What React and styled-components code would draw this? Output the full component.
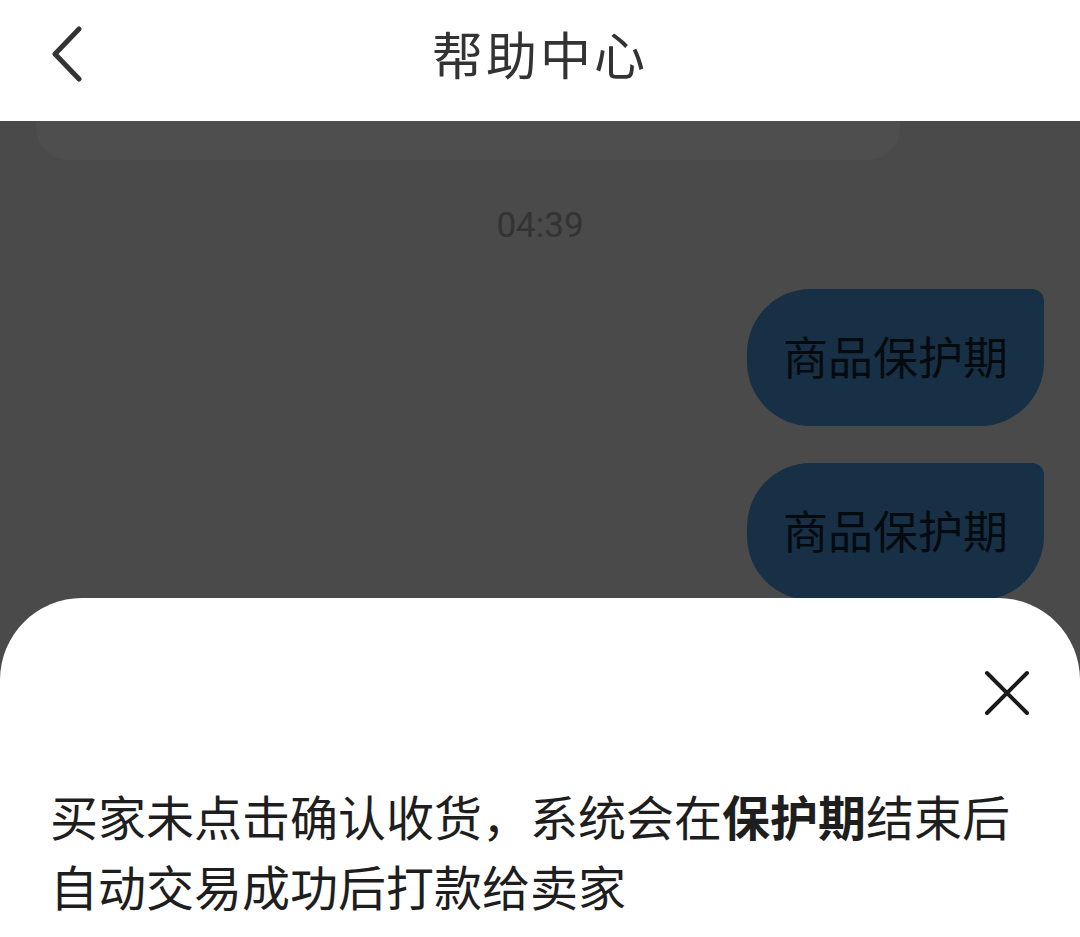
import React from 'react';
import styled, { createGlobalStyle } from 'styled-components';

const GlobalStyle = createGlobalStyle`
  html, body {
    margin: 0;
    padding: 0;
    background: #4a4a4a;
  }
  body {
    font-family: 'Noto Sans CJK SC', 'Noto Sans', sans-serif;
  }
`;

const messages = ['商品保护期', '商品保护期'];

const App = () => {
  return (
    <>
      <GlobalStyle />
      <Page>
        <Header>
          <BackButton aria-label="返回">
            <svg width="34" height="56" viewBox="0 0 34 56" fill="none">
              <path d="M29 3 L5 28 L29 53" stroke="#333" strokeWidth="5" strokeLinecap="round" strokeLinejoin="round" />
            </svg>
          </BackButton>
          <Title>帮助中心</Title>
        </Header>
        <Chat>
          <PrevCard />
          <Time>04:39</Time>
          <Messages>
            {messages.map((m, i) => (
              <Row key={i}>
                <Bubble>{m}</Bubble>
              </Row>
            ))}
          </Messages>
        </Chat>
        <Sheet>
          <SheetTop>
            <CloseButton aria-label="关闭">
              <svg width="46" height="46" viewBox="0 0 46 46" fill="none">
                <path d="M3 3 L43 43 M43 3 L3 43" stroke="#1a1a1a" strokeWidth="4" strokeLinecap="round" />
              </svg>
            </CloseButton>
          </SheetTop>
          <Answer>
            <Line>买家未点击确认收货，系统会在<b>保护期</b>结束后</Line>
            <Line>自动交易成功后打款给卖家</Line>
          </Answer>
        </Sheet>
      </Page>
    </>
  );
};

const Page = styled.div`
  position: relative;
  width: 1080px;
  height: 937px;
  overflow: hidden;
  display: flex;
  flex-direction: column;
  background: #4a4a4a;
`;

const Header = styled.div`
  position: relative;
  height: 121px;
  flex-shrink: 0;
  background: #ffffff;
  display: flex;
  align-items: center;
  justify-content: center;
`;

const BackButton = styled.div`
  position: absolute;
  left: 50px;
  top: 26px;
  width: 34px;
  height: 56px;
`;

const Title = styled.div`
  font-size: 51px;
  color: #333333;
  letter-spacing: 3px;
  margin-top: -16px;
`;

const Chat = styled.div`
  flex: 1;
  display: flex;
  flex-direction: column;
`;

const PrevCard = styled.div`
  margin: 0 180px 0 36px;
  height: 39px;
  background: #4e4e4e;
  border-radius: 0 0 32px 32px;
`;

const Time = styled.div`
  margin-top: 46px;
  text-align: center;
  font-family: Roboto, 'Noto Sans', sans-serif;
  font-size: 35px;
  color: #333333;
  line-height: 40px;
`;

const Messages = styled.div`
  display: flex;
  flex-direction: column;
  gap: 37px;
  margin-top: 43px;
`;

const Row = styled.div`
  display: flex;
  justify-content: flex-end;
  padding-right: 36px;
`;

const Bubble = styled.div`
  width: 297px;
  height: 137px;
  box-sizing: border-box;
  display: flex;
  align-items: center;
  justify-content: center;
  background: #173046;
  border-radius: 64px 12px 64px 64px;
  color: #050a0f;
  font-size: 45px;
  padding-bottom: 4px;
`;

const Sheet = styled.div`
  position: absolute;
  left: 0;
  right: 0;
  top: 598px;
  bottom: 0;
  background: #ffffff;
  border-radius: 82px 82px 0 0;
  padding: 0 50px;
`;

const SheetTop = styled.div`
  display: flex;
  justify-content: flex-end;
  padding-top: 72px;
`;

const CloseButton = styled.div`
  width: 46px;
  height: 46px;
`;

const Answer = styled.div`
  margin-top: 64px;
  display: flex;
  flex-direction: column;
  font-size: 48px;
  color: #1e1e1e;
`;

const Line = styled.div`
  height: 70px;
  line-height: 70px;
  white-space: nowrap;
  b {
    font-weight: 700;
  }
`;

export default App;
